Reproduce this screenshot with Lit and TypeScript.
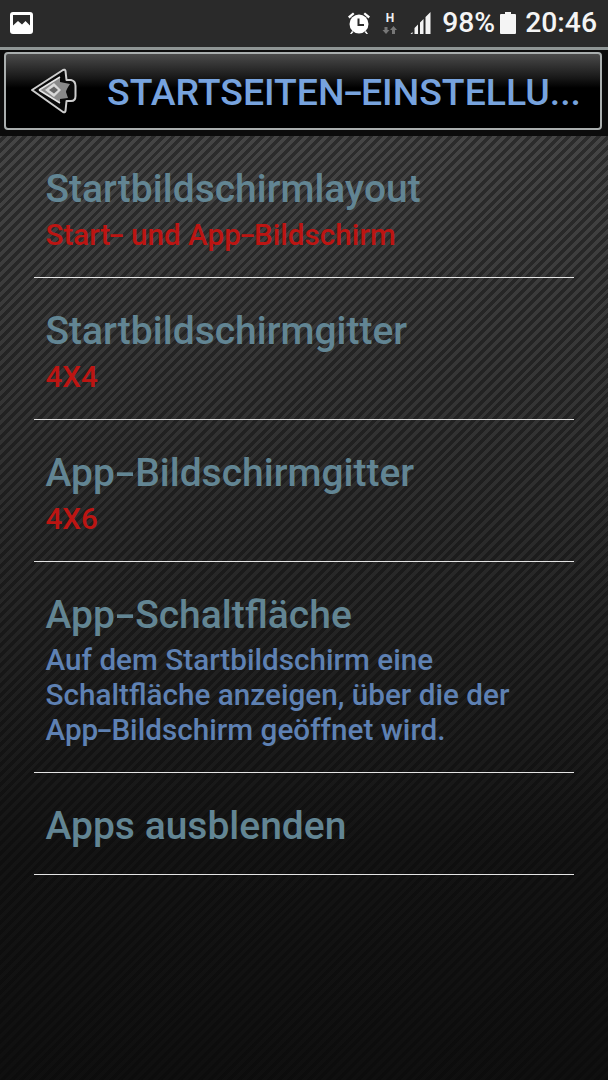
import { LitElement, html, css } from "lit";
import { customElement } from "lit/decorators.js";

interface Item { title: string; sub?: string[]; red?: boolean }
const items: Item[] = [
  { title: "Startbildschirmlayout", sub: ["Start- und App-Bildschirm"], red: true },
  { title: "Startbildschirmgitter", sub: ["4X4"], red: true },
  { title: "App-Bildschirmgitter", sub: ["4X6"], red: true },
  { title: "App-Schaltfläche", sub: ["Auf dem Startbildschirm eine", "Schaltfläche anzeigen, über die der", "App-Bildschirm geöffnet wird."] },
  { title: "Apps ausblenden" },
];

const wide = (text: string) => {
  const parts = text.split("-");
  return parts.map((p, i) => html`${p}${i < parts.length - 1 ? html`<span class="hy">-</span>` : ""}`);
};

@customElement("app-root")
export class AppRoot extends LitElement {
  static styles = css`
    :host { display: block; width: 608px; height: 1080px; overflow: hidden; font-family: Roboto, "Noto Sans", sans-serif; background: #0d0d0d; }
    .status { height: 47px; background: #2a2a2a; display: flex; align-items: center; padding: 0 11px 1px 10px; color: #fff; box-sizing: border-box; }
    .status .spacer { flex: 1; }
    .status svg { display: block; }
    .status .txt { font-size: 28.3px; line-height: 46px; font-weight: 500; color: #f4f4f4; }
    .pct { margin-left: 10px; }
    .clock { margin-left: 9px; }
    .batt { margin-left: 5px; }
    .net { margin-left: 10px; }
    .sig { margin-left: 12px; }
    .bar { height: 89px; background: #0c0c0c; padding: 2px 6px 0 4px; box-sizing: border-box; border-top: 3px solid #8f9695; }
    .inner { height: 78px; box-sizing: border-box; border: 2px solid #a9aeae; border-radius: 4px; display: flex; align-items: center; background: linear-gradient(#4a4a4a 0, #1c1c1c 22px, #000 34px, #000 100%); }
    .back { margin-left: 24px; flex: none; display: block; }
    .title { margin-left: 29px; padding-top: 2px; font-size: 37.4px; font-weight: 500; color: #77a3de; white-space: nowrap; line-height: 74px; }
    .content { height: 944px; padding: 0 34px; box-sizing: border-box; background:
        linear-gradient(rgba(8,8,8,0) 0, rgba(8,8,8,.35) 35%, rgba(8,8,8,.8) 75%, rgba(8,8,8,.88) 100%),
        repeating-linear-gradient(-45deg, #2c2c2c 0, #2c2c2c 3.5px, #454545 3.5px, #454545 7px); }
    .row { padding: 30px 12px 24px 11.5px; border-bottom: 1px solid #e4e4e4; }
    .t { font-size: 39px; line-height: 47px; font-weight: 500; color: #628593; white-space: nowrap; }
    .subs { margin-top: 4px; margin-bottom: 1px; }
    .subs.long { margin-top: 3px; }
    .s { font-size: 29.7px; line-height: 35px; font-weight: 500; color: #5e81b3; white-space: nowrap; }
    .s.red { color: #bc1512; }
    .hy { display: inline-block; width: .44em; text-align: center; transform: scaleX(1.6); }
    .t .hy { width: .52em; }
  `;

  render() {
    return html`
      <div class="status">
        <svg width="24" height="24" viewBox="0 0 24 24"><rect y="1" width="23" height="22" rx="3" fill="#fff"/><path d="M3 4h17v10.500L15.500 10l-3.500 3.500L8 10l-5 4.500z" fill="#2a2a2a"/></svg>
        <div class="spacer"></div>
        <svg width="24" height="24" viewBox="0 0 24 24"><circle cx="12" cy="13" r="9.500" fill="#fff"/><path d="M1 5.500 L6 1.500 L7.500 3 L2.500 7.500Z M23 5.500 L18 1.500 L16.500 3 L21.500 7.500Z M5 20l-2 3h1.500l2-2z M19 20l2 3h-1.500l-2-2z" fill="#fff"/><path d="M11.500 7.500v6.500h5.500" fill="none" stroke="#2a2a2a" stroke-width="2"/></svg>
        <svg class="net" width="16" height="24" viewBox="0 0 16 24"><text x="9" y="10.500" text-anchor="middle" font-family="Roboto" font-weight="700" font-size="12" fill="#f0f0f0">H</text><path d="M5 23l-3.500-4h2v-3h3v3h2z" fill="#777"/><path d="M12.500 15l3.500 4h-2v4h-3v-4h-2z" fill="#777"/></svg>
        <svg class="sig" width="23" height="22" viewBox="0 0 20 22"><path d="M0 22l2-2v2zM4 22v-6l3.500-3.500V22zM9.500 22V10.500l3.500-3.500V22zM15 22V5l5-5v22z" fill="#f4f4f4"/></svg>
        <span class="txt pct">98%</span>
        <svg class="batt" width="16" height="22" viewBox="0 0 16 22"><path d="M5 0h6v2h4a1 1 0 0 1 1 1v18a1 1 0 0 1-1 1H1a1 1 0 0 1-1-1V3a1 1 0 0 1 1-1h4z" fill="#f4f4f4"/></svg>
        <span class="txt clock">20:46</span>
      </div>
      <div class="bar">
        <div class="inner">
          <svg class="back" width="48" height="48" viewBox="30 66 48 48">
            <path d="M32 89 L63 69 Q65 68 65.500 70 L66.500 79 L71 79 Q75.500 80 75.500 85 V95 Q75.500 100 71 100 L66.500 100 L65.500 110 Q65 112 63 111Z" fill="#0a0a0a" stroke="#cdcdcd" stroke-width="2" stroke-linejoin="round"/>
            <path d="M39 89 L60 76 L60 81 L70 83 Q66 89 66 91 L68 97 L60 98 L60 102Z" fill="#8a8a8a"/>
            <path d="M39 89 L60 76 M39 89 L60 102" stroke="#e6e6e6" stroke-width="1.500" fill="none"/>
            <path d="M45 89 L54 82 L61 89 L54 96Z" fill="#d8d8d8"/>
            <path d="M49 89 L54 85.500 L58 89 L54 92.500Z" fill="#666"/>
          </svg>
          <div class="title">${wide("STARTSEITEN-EINSTELLU...")}</div>
        </div>
      </div>
      <div class="content">
        ${items.map((it) => html`
          <div class="row">
            <div class="t">${wide(it.title)}</div>
            ${it.sub ? html`<div class="subs ${it.sub.length > 1 ? "long" : ""}">${it.sub.map(l => html`<div class="s ${it.red ? "red" : ""}">${wide(l)}</div>`)}</div>` : ""}
          </div>`)}
      </div>
    `;
  }
}
